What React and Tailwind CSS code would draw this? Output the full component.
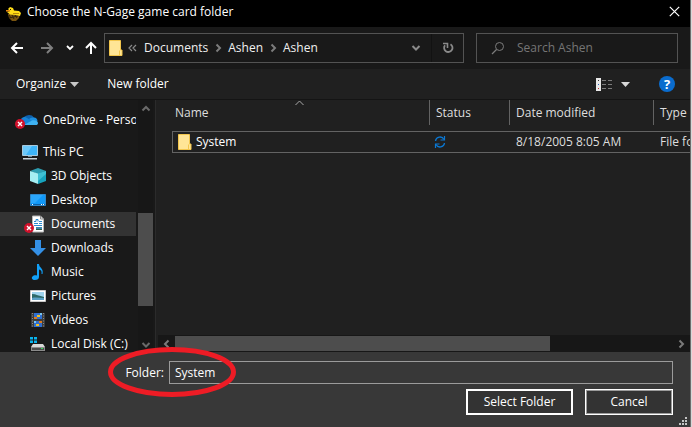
import React from 'react';

function Svg({ w, h, className = '', children }) {
  return (
    <svg width={w} height={h} viewBox={`0 0 ${w} ${h}`} className={`shrink-0 ${className}`} fill="none" aria-hidden="true">
      {children}
    </svg>
  );
}

function Chevron({ dir = 'down', className = '' }) {
  const d = {
    down: 'M1.5 3 5 6.5 8.5 3',
    up: 'M1.5 6.5 5 3 8.5 6.5',
    left: 'M6.5 1.5 3 5 6.5 8.5',
    right: 'M3.5 1.5 7 5 3.5 8.5',
  }[dir];
  return (
    <Svg w={10} h={10} className={className}>
      <path d={d} stroke="currentColor" strokeWidth="2" />
    </Svg>
  );
}

function AppIcon() {
  return (
    <Svg w={16} h={16}>
      <path d="M2 8h12l-1 4-3 3H6l-3-3z" fill="#7a5510" />
      <path d="M3 9l2 3M6 9l2 4M9 9l2 3M3 12l9-2" stroke="#33240a" />
      <path d="M2 3 4 1l3 1 1 2.500 5 .5L15 7l-1 3-4-1-6-.5L1 6l3-1z" fill="#ffdc18" />
      <path d="M0 4h4v1.500H0z" fill="#e88a10" />
      <path d="M4 3h1v1H4z" fill="#221a00" />
      <path d="M7 7h6v1H7z" fill="#b98c08" />
    </Svg>
  );
}

function FolderIcon() {
  return (
    <Svg w={14} h={16}>
      <path d="M.5.500h11v9.500h1.500v5.500H.500z" fill="#ffe596" stroke="#f3c64c" />
      <path d="M10.500 10.500v5" stroke="#f3c64c" />
    </Svg>
  );
}

function ErrorBadge({ x, y }) {
  return (
    <g transform={`translate(${x} ${y})`}>
      <circle cx="5" cy="5" r="5" fill="#d0112b" />
      <path d="M3 3l4 4M7 3 3 7" stroke="#fff" strokeWidth="1.400" />
    </g>
  );
}

function OneDriveIcon() {
  return (
    <Svg w={23} h={18}>
      <path d="M8 8a6 5 0 0 1 11-1.500L14 11z" fill="#0f62ae" />
      <path d="M6 12a4 4 0 0 1 6-5l7 4-8 3H8z" fill="#1684d8" />
      <path d="M14 8a5 4 0 0 1 5-1.500 4 4 0 0 1 3.500 3.500l-5 1z" fill="#1c8fe0" />
      <path d="M9 14 17 9.500c3-.5 6 .5 6 2.500 0 1.500-1 2-2 2z" fill="#3fb2f2" />
      <ErrorBadge x={0} y={8} />
    </Svg>
  );
}

function PcIcon() {
  return (
    <Svg w={16} h={16}>
      <path d="M.5 1.500h15v10H.500z" fill="#3db4f8" stroke="#a8c9dc" />
      <path d="M1 2h9L4 11H1z" fill="#6cc9fb" />
      <path d="M6 12h4v1H6z" fill="#6f8fa3" />
      <path d="M1 14h14v1.500H1z" fill="#c9d5dc" />
    </Svg>
  );
}

function CubeIcon() {
  return (
    <Svg w={16} h={16}>
      <path d="M8 0l8 3-8 3-8-3z" fill="#2d9db0" />
      <path d="M0 3l8 2.500V16l-8-3z" fill="#a5eef2" />
      <path d="M8 5.500 16 3v10l-8 3z" fill="#17a3bd" />
      <path d="M8 5.500 16 3v3l-8 7z" fill="#3fc0d3" />
    </Svg>
  );
}

function DesktopIcon() {
  return (
    <Svg w={16} h={16}>
      <path d="M.5 2.500h15v11H.500z" fill="#1098f7" stroke="#2f87c9" />
      <path d="M1 3h12L5 11H1z" fill="#2aa6fb" />
      <path d="M1 12h14v1H1z" fill="#0a5fa8" />
      <path d="M2 12h1v1H2zM11 12h1v1h-1zM13 12h1v1h-1z" fill="#fff" />
    </Svg>
  );
}

function DocumentsIcon() {
  return (
    <Svg w={22} h={18}>
      <path d="M8.500 1h8l3 3v13h-11z" fill="#fff" stroke="#b7b7b7" />
      <path d="M16.500 1v3h3" stroke="#8d8d8d" />
      <path d="M10 6.500h2v-2h2v2M10 8.500h4M15 6.500h3M15 8.500h3M10 10.500h8" stroke="#2b8bd0" />
      <path d="M12 12h6v3h-6z" fill="#3d87ad" />
      <path d="M12 14h6v1h-6z" fill="#2f5b4b" />
      <ErrorBadge x={0} y={8} />
    </Svg>
  );
}

function DownloadsIcon() {
  return (
    <Svg w={16} h={16}>
      <path d="M5 0h6v8h5l-8 8-8-8h5z" fill="#3490e6" />
    </Svg>
  );
}

function MusicIcon() {
  return (
    <Svg w={16} h={16}>
      <path d="M7 0h2c0 4 5 4 3.500 10h-1C12 7 11 6 9 5.500V13c0 2-1.500 3-4 3-3 0-4-2-2.500-3.500C3.500 11 5.500 11 7 11.500z" fill="#11a0f8" />
    </Svg>
  );
}

function PicturesIcon() {
  return (
    <Svg w={16} h={16}>
      <path d="M.5 2.500h15v11H.500z" fill="#fff" stroke="#c8c8c8" />
      <path d="M2 4h12v8H2z" fill="#9fd4ee" />
      <path d="M2 6c4 0 7 2 12 3v3H2z" fill="#2d6a68" />
      <path d="M2 10c4-1 8 0 12 0v2H2z" fill="#5aa0c6" />
    </Svg>
  );
}

function VideosIcon() {
  return (
    <Svg w={16} h={16}>
      <path d="M1 1h14v14H1z" fill="#3c3c3c" />
      <path d="M2.500 1v14M13.500 1v14" stroke="#8a8a8a" strokeDasharray="1 1.500" />
      <path d="M4 1h8v6H4zM4 9h8v6H4z" fill="#2f6fd0" />
      <path d="M7 3h3v2H7zM6 12h3v2H6z" fill="#f4c020" />
      <path d="M4 5h3v2H4zM9 9h3v2H9z" fill="#e07a1c" />
      <path d="M10 1h2v2h-2zM4 9h2v2H4z" fill="#7ac4ef" />
    </Svg>
  );
}

function DiskIcon() {
  return (
    <Svg w={16} h={16}>
      <path d="M0 1h3v2.500H0zM4 1h3v2.500H4zM0 4.500h3V7H0zM4 4.500h3V7H4z" fill="#08b4ee" />
      <path d="M3 8h10l2 3H1z" fill="#d9d9d9" />
      <path d="M1 11h14v4H1z" fill="#8b8b8b" />
      <path d="M2 12h12v2H2z" fill="#4c4c4c" />
      <path d="M11 12h2v1h-2z" fill="#35e05a" />
    </Svg>
  );
}

const places = [
  { name: '3D Objects', Icon: CubeIcon },
  { name: 'Desktop', Icon: DesktopIcon },
  { name: 'Documents', Icon: DocumentsIcon, selected: true, badge: true },
  { name: 'Downloads', Icon: DownloadsIcon },
  { name: 'Music', Icon: MusicIcon },
  { name: 'Pictures', Icon: PicturesIcon },
  { name: 'Videos', Icon: VideosIcon },
  { name: 'Local Disk (C:)', Icon: DiskIcon },
];

function TreeRow({ Icon, name, indent, selected }) {
  return (
    <a
      href="#"
      aria-current={selected ? 'true' : undefined}
      className={`flex h-6 shrink-0 items-center gap-[5px] whitespace-nowrap ${indent} ${selected ? 'bg-[#333333]' : ''}`}
    >
      <Icon />
      {name}
    </a>
  );
}

function TitleBar() {
  return (
    <header className="flex h-[27px] items-center bg-black pr-2.5 pl-[6px]">
      <AppIcon />
      <h1 className="ml-[5px] flex-1 pb-1">Choose the N-Gage game card folder</h1>
      <button type="button" aria-label="Close" className="pb-1">
        <Svg w={11} h={11}>
          <path d="M.8.800l9.400 9.400M10.200.800.800 10.200" stroke="#fff" strokeWidth="1.200" />
        </Svg>
      </button>
    </header>
  );
}

function NavBar() {
  return (
    <nav className="flex h-[42px] items-center bg-[#191919] pr-3 pl-[10px]">
      <button type="button" aria-label="Back">
        <Svg w={14} h={14}><path d="M13 7H2M7 2 2 7l5 5" stroke="#fff" strokeWidth="2" /></Svg>
      </button>
      <button type="button" aria-label="Forward" className="ml-4">
        <Svg w={14} h={14}><path d="M1 7h11M7 2l5 5-5 5" stroke="#7f7f7f" strokeWidth="2" /></Svg>
      </button>
      <button type="button" aria-label="Recent locations" className="ml-3 text-white">
        <Svg w={8} h={8}><path d="M1 2l3 3 3-3" stroke="currentColor" strokeWidth="1.800" /></Svg>
      </button>
      <button type="button" aria-label="Up" className="ml-2.5">
        <Svg w={14} h={14}><path d="M7 13V2M2 7l5-5 5 5" stroke="#fff" strokeWidth="2" /></Svg>
      </button>
      <div className="ml-1.5 flex h-[30px] flex-1 items-center border border-[#535353] pl-1 text-[#f0f0f0]">
        <FolderIcon />
        <Svg w={9} h={8} className="ml-[5px]"><path d="M4 1 1 4l3 3M8 1 5 4l3 3" stroke="#8a8a8a" strokeWidth="1.200" /></Svg>
        <a href="#" className="ml-[7px]">Documents</a>
        <Chevron dir="right" className="mx-[5px] text-[#7c7c7c]" />
        <a href="#">Ashen</a>
        <Chevron dir="right" className="mx-[5px] text-[#7c7c7c]" />
        <a href="#">Ashen</a>
        <button type="button" aria-label="Previous locations" className="ml-auto px-2.5 text-[#8a8a8a]">
          <Chevron />
        </button>
        <button type="button" aria-label="Refresh" className="flex h-full w-8 items-center justify-center border-l border-[#121212]">
          <Svg w={12} h={12}>
            <path d="M8.500 2.200A4.200 4.200 0 1 1 3 3.200" stroke="#8a8a8a" strokeWidth="1.800" />
            <path d="M1 1.500h4.500V6" stroke="#8a8a8a" strokeWidth="1.600" />
          </Svg>
        </button>
      </div>
      <div className="ml-3 flex h-[30px] w-[202px] items-center gap-3 border border-[#535353] pl-3.5">
        <Svg w={14} h={14}>
          <circle cx="8.500" cy="5.500" r="4" stroke="#7c7c7c" />
          <path d="M5.500 8.500 1 13" stroke="#7c7c7c" strokeWidth="1.200" />
        </Svg>
        <input type="search" aria-label="Search Ashen" placeholder="Search Ashen" className="min-w-0 flex-1 bg-transparent outline-none placeholder:text-[#757575]" />
      </div>
    </nav>
  );
}

function ToolBar() {
  return (
    <div className="flex h-[31px] items-center border-b border-[#141414] bg-[#202020] pr-[15px] pl-4">
      <button type="button" className="flex items-center gap-1">
        Organize
        <Svg w={9} h={5}><path d="M0 0h9L4.500 5z" fill="#c8c8c8" /></Svg>
      </button>
      <button type="button" className="ml-7">New folder</button>
      <button type="button" aria-label="Change view" className="ml-auto">
        <Svg w={17} h={13}>
          <path d="M0 0h5v13H0z" fill="#e8e8e8" />
          <path d="M2 2h1v1H2z" fill="#333" />
          <path d="M2 6h1v1H2z" fill="#2a62c0" />
          <path d="M2 10h1v1H2z" fill="#c02a2a" />
          <path d="M6 2.500h4M12 2.500h4M6 6.500h4M12 6.500h4M6 10.500h4M12 10.500h4" stroke="#7c7c7c" />
        </Svg>
      </button>
      <button type="button" aria-label="More view options" className="ml-2">
        <Svg w={9} h={5}><path d="M0 0h9L4.500 5z" fill="#d8d8d8" /></Svg>
      </button>
      <button type="button" aria-label="Help" className="ml-[29px] flex size-4 items-center justify-center rounded-full bg-[#0a6cce] text-[13px] font-bold text-white">
        ?
      </button>
    </div>
  );
}

function Sidebar() {
  return (
    <aside className="flex w-[158px] shrink-0 bg-[#191919]">
      <div className="flex min-w-0 flex-1 flex-col overflow-hidden pt-2">
        <TreeRow Icon={OneDriveIcon} name="OneDrive - Personal" indent="pl-[15px]" />
        <div className="h-2 shrink-0" />
        <TreeRow Icon={PcIcon} name="This PC" indent="pl-[22px]" />
        {places.map((p) => (
          <TreeRow key={p.name} {...p} indent={p.badge ? 'pl-6' : 'pl-[30px]'} />
        ))}
      </div>
      <div className="ml-0.5 flex w-[15px] flex-col items-center bg-[#171717] text-[#6a6a6a]">
        <Chevron dir="up" className="mt-1" />
        <div className="mt-[99px] h-[93px] w-full bg-[#4d4d4d]" />
        <Chevron className="mt-auto mb-0.5" />
      </div>
      <div className="ml-0.5 w-[3px] border-l border-[#2b2b2b] bg-[#202020]" />
    </aside>
  );
}

function FileList() {
  return (
    <main className="flex min-w-0 flex-1 flex-col bg-[#202020]">
      <div className="relative flex-1 overflow-hidden pl-3.5">
        <Svg w={9} h={6} className="absolute top-0 left-[137px]">
          <path d="M.5 5 4.500 1l4 4" stroke="#a8a8a8" />
        </Svg>
        <table className="w-full min-w-[580px] table-fixed border-separate border-spacing-0 text-left">
          <colgroup>
            <col className="w-[258px]" />
            <col className="w-20" />
            <col className="w-36" />
            <col />
          </colgroup>
          <thead>
            <tr className="h-[25px] text-[#dedede]">
              <th className="border-r border-[#636363] pl-[3px] font-normal">Name</th>
              <th className="border-r border-[#636363] pl-1.5 font-normal">Status</th>
              <th className="border-r border-[#636363] pl-1.5 font-normal">Date modified</th>
              <th className="pl-1.5 font-normal">Type</th>
            </tr>
          </thead>
          <tbody>
            <tr className="h-1.5"><td colSpan={4} /></tr>
            <tr className="h-[22px]">
              <td className="border-y border-l border-[#636363] pl-[5px]">
                <div className="flex items-center gap-1"><FolderIcon />System</div>
              </td>
              <td className="border-y border-[#636363] pl-1">
                <Svg w={12} h={12}>
                  <path d="M1.500 5A4.500 4.500 0 0 1 10 3.500M10.500 7A4.500 4.500 0 0 1 2 8.500" stroke="#0a78d4" strokeWidth="1.300" />
                  <path d="M10.500 0v4H6.500M1.500 12V8h4" stroke="#0a78d4" strokeWidth="1.200" />
                </Svg>
              </td>
              <td className="border-y border-[#636363] pl-1.5 text-[#dedede]">8/18/2005 8:05 AM</td>
              <td className="border-y border-[#636363] pl-1.5 text-[#dedede]">File folder</td>
            </tr>
          </tbody>
        </table>
      </div>
      <div className="flex h-[17px] items-center bg-[#171717] text-[#7a7a7a]">
        <Chevron dir="left" className="ml-1" />
        <div className="ml-[3px] h-[15px] w-[375px] bg-[#4d4d4d]" />
        <Chevron dir="right" className="mr-1 ml-auto" />
      </div>
    </main>
  );
}

function Footer() {
  return (
    <footer className="relative flex h-[75px] flex-col bg-[#383838] pt-[9px] pr-[17px]">
      <div className="flex items-center">
        <label htmlFor="folder" className="w-[164px] text-right">Folder:</label>
        <input id="folder" defaultValue="System" className="ml-[5px] h-[23px] min-w-0 flex-1 border border-[#9b9b9b] bg-[#383838] px-[5px] text-white outline-none" />
      </div>
      <div className="mt-[5px] flex justify-end gap-3">
        <button type="button" className="h-[26px] w-[107px] border-2 border-white bg-[#333333]">Select Folder</button>
        <button type="button" className="h-[26px] w-[88px] border border-white bg-[#333333] ring-1 ring-[#9b9b9b] ring-inset">Cancel</button>
      </div>
      <Svg w={8} h={8} className="absolute right-[3px] bottom-0.5">
        <path d="M6 0h2v2H6zM3 3h2v2H3zM6 3h2v2H6zM0 6h2v2H0zM3 6h2v2H3zM6 6h2v2H6z" fill="#c4c4c4" />
      </Svg>
      <Svg w={130} h={52} className="pointer-events-none absolute -top-1.5 left-[107px]">
        <ellipse cx="65" cy="26" rx="61.500" ry="22.500" stroke="#ee1c25" strokeWidth="5" />
      </Svg>
    </footer>
  );
}

export default function App() {
  return (
    <div className="flex h-screen bg-[#d8d8d8] pr-px font-['Open_Sans',sans-serif] text-xs leading-4 text-white">
      <div className="flex min-w-0 flex-1 flex-col border-r border-[#6e6e6e]">
        <TitleBar />
        <NavBar />
        <ToolBar />
        <div className="flex min-h-0 flex-1">
          <Sidebar />
          <FileList />
        </div>
        <Footer />
      </div>
    </div>
  );
}
